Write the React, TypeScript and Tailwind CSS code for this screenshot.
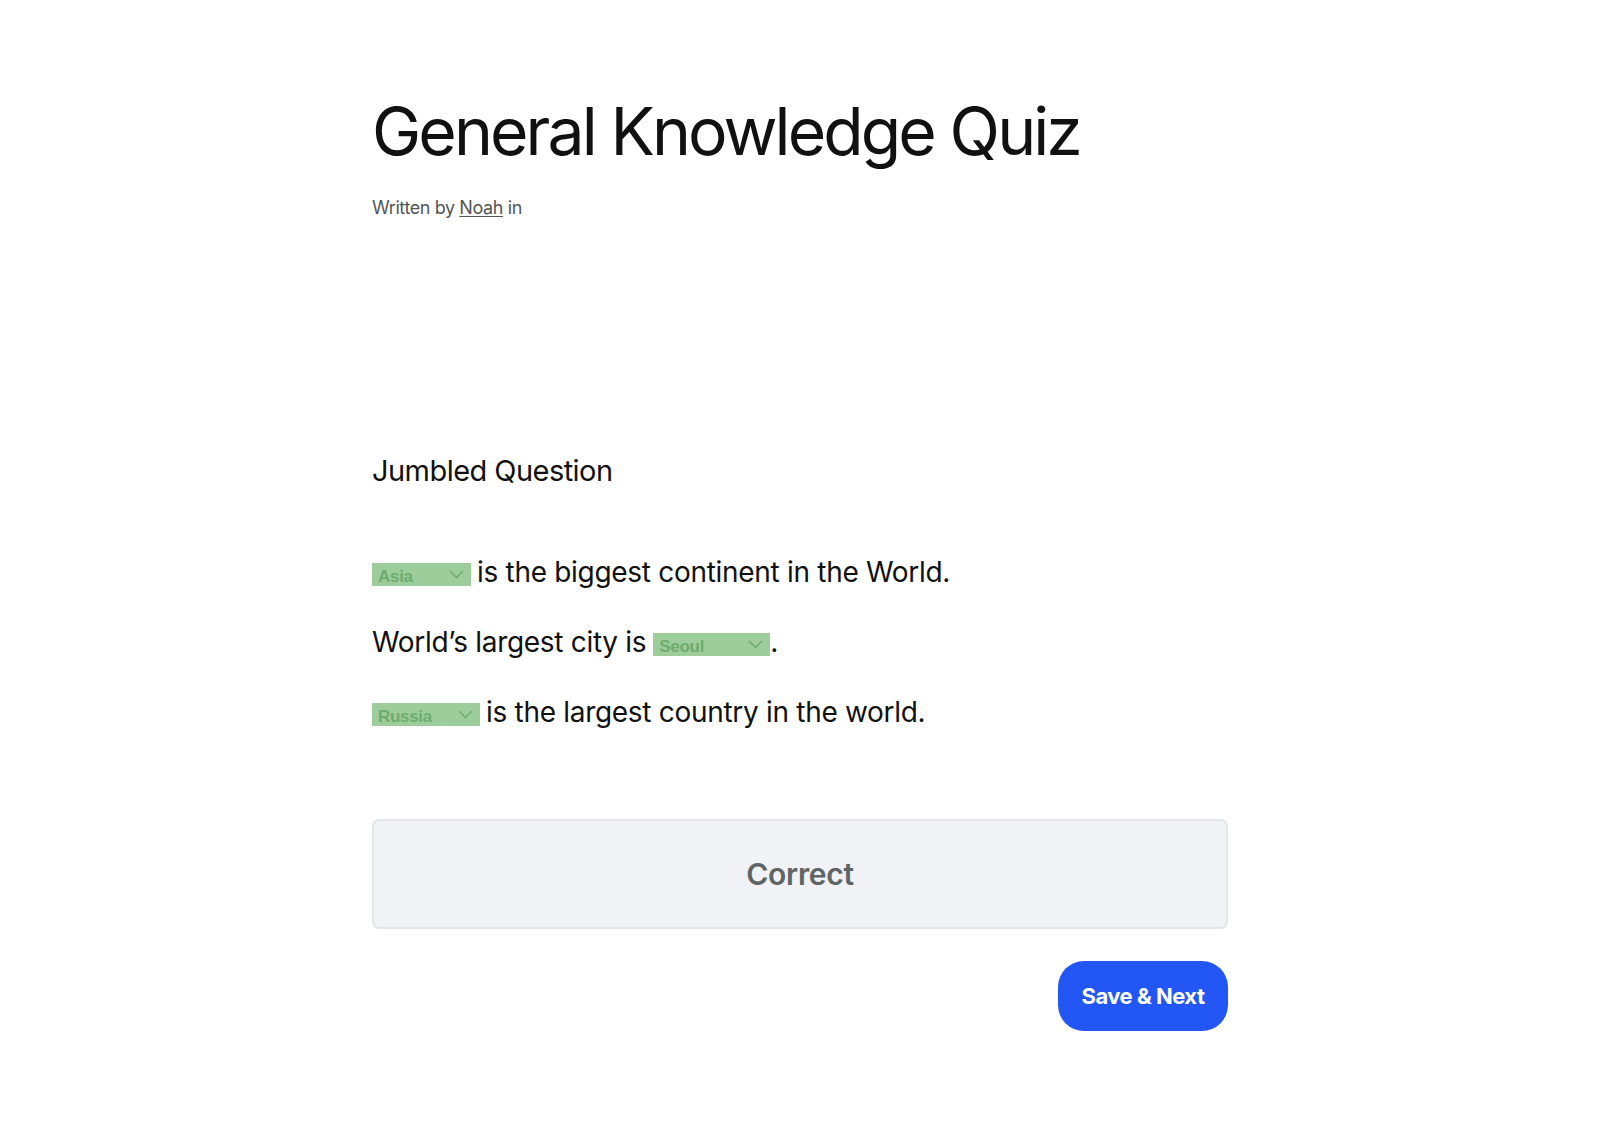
import React from "react";

function Chevron() {
  return (
    <svg width="15" height="9" viewBox="0 0 15 9" fill="none" className="shrink-0">
      <path d="M1 1 L7.5 7.5 L14 1" stroke="#6fae70" strokeWidth="1.6" fill="none" />
    </svg>
  );
}

function Select({ label, width }: { label: string; width: string }) {
  return (
    <span
      className={`inline-flex items-center justify-between h-[23px] mt-[5px] bg-[#9dcd9b] pl-[6px] pr-[7px] ${width}`}
      style={{ fontFamily: '"Liberation Sans", Arial, sans-serif' }}
    >
      <span className="text-[17px] font-bold text-[#6dac6e] leading-none pt-[3px]">{label}</span>
      <Chevron />
    </span>
  );
}

export default function App() {
  return (
    <div
      className="min-h-[1136px] bg-white text-[#111111]"
      style={{ fontFamily: 'Inter, "Noto Sans", sans-serif' }}
    >
      <div className="mx-auto w-[856px] pt-[89px]">
        <h1 className="text-[66px] leading-[84px] font-normal tracking-[-2.9px] text-[#111111]">
          General Knowledge Quiz
        </h1>
        <p className="mt-[23px] text-[18px] leading-[24px] text-[#555555] tracking-[-0.4px]">
          Written by <span className="underline underline-offset-2">Noah</span> in
        </p>

        <h2 className="mt-[233px] text-[29px] leading-[36px] font-normal text-[#111111] tracking-[-0.55px]">
          Jumbled Question
        </h2>

        <div className="mt-[64px] flex flex-col gap-[32px] text-[28px] leading-[38px] tracking-[-0.3px] text-[#111111]">
          <p className="flex items-center gap-[6px]">
            <Select label="Asia" width="w-[99px]" />
            <span>is the biggest continent in the World.</span>
          </p>
          <p className="flex items-center">
            <span>World’s largest city is</span>
            <span className="ml-[7px] flex"><Select label="Seoul" width="w-[117px]" /></span>
            <span>.</span>
          </p>
          <p className="flex items-center gap-[6px]">
            <Select label="Russia" width="w-[108px]" />
            <span>is the largest country in the world.</span>
          </p>
        </div>

        <div className="mt-[88px] h-[110px] rounded-[7px] border-2 border-[#e3e5ea] bg-[#f0f2f5] flex items-center justify-center">
          <span className="text-[30px] font-semibold text-[#5f6566] tracking-[-0.3px]">Correct</span>
        </div>

        <div className="mt-[32px] flex justify-end">
          <button className="h-[70px] w-[170px] rounded-[26px] bg-[#2357f5] text-white text-[22px] font-bold tracking-[-0.5px]">
            Save &amp; Next
          </button>
        </div>
      </div>
    </div>
  );
}
